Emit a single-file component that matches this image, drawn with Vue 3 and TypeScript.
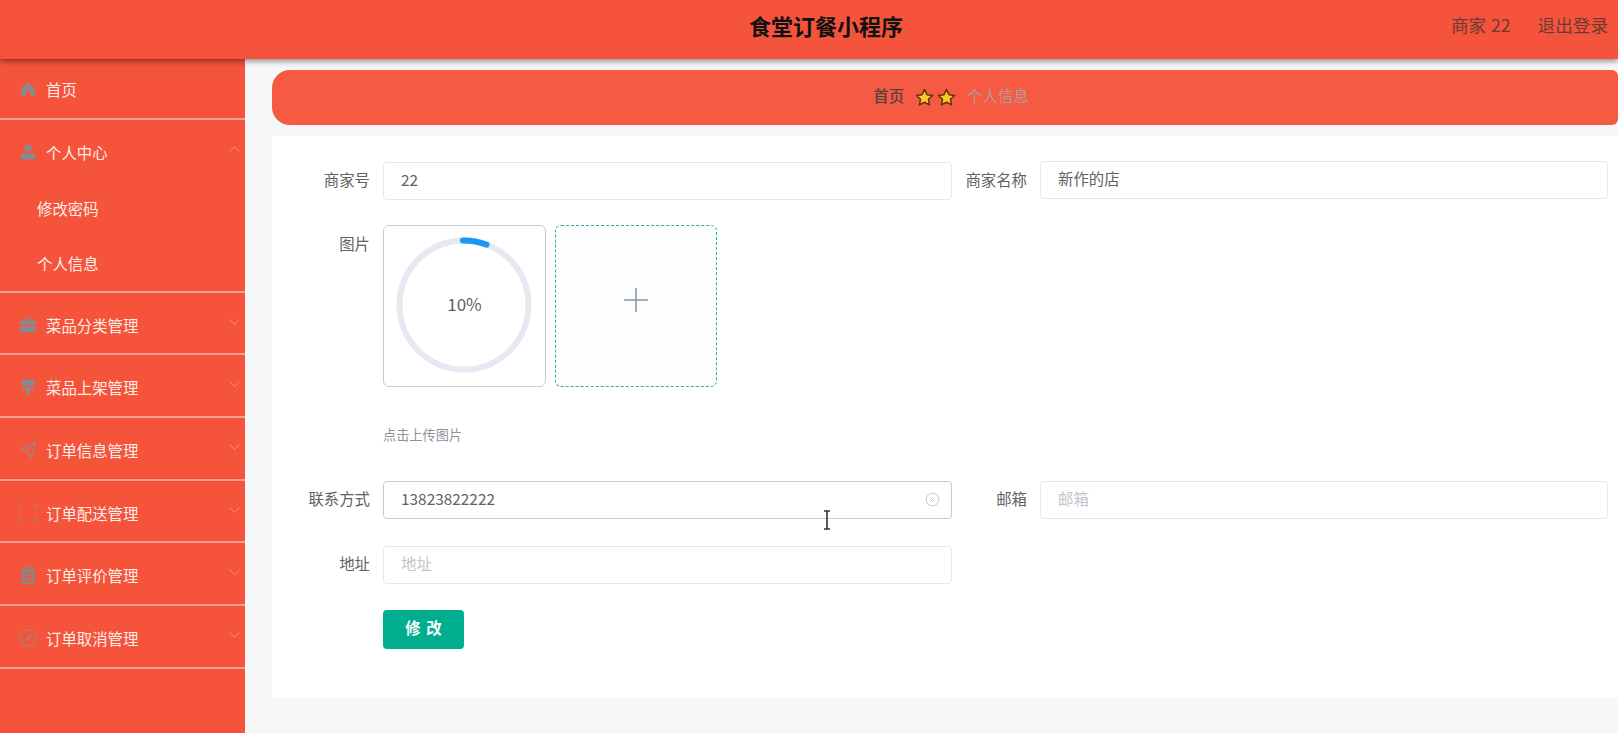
<script setup lang="ts">
interface MenuItem {
  title: string
  icon: string
  children?: string[]
  open?: boolean
}

const menu: MenuItem[] = [
  { title: '首页', icon: 'home' },
  { title: '个人中心', icon: 'user', children: ['修改密码', '个人信息'], open: true },
  { title: '菜品分类管理', icon: 'case' },
  { title: '菜品上架管理', icon: 'brush' },
  { title: '订单信息管理', icon: 'send' },
  { title: '订单配送管理', icon: 'scan' },
  { title: '订单评价管理', icon: 'order' },
  { title: '订单取消管理', icon: 'compass' },
]
</script>

<template>
  <div class="page">
    <header class="topbar">
      <div class="topbar__title">食堂订餐小程序</div>
      <div class="topbar__user">
        <span>商家 22</span>
        <span>退出登录</span>
      </div>
    </header>

    <div class="body">
      <aside class="side">
        <div v-for="item in menu" :key="item.title" class="side__group">
          <div class="side__title">
            <svg class="side__icon" viewBox="0 0 16 16">
              <path v-if="item.icon === 'home'" class="fill" d="M8 1.4 15.6 8.2 14.6 9V15H10.4V11.4A2.4 2.4 0 0 0 5.6 11.4V15H1.4V9L.4 8.2Z" />
              <g v-else-if="item.icon === 'user'" class="fill">
                <circle cx="8" cy="4.2" r="3.6" />
                <path d="M.6 15.4V12.4C.6 10.6 2 9.4 3.8 9.4H12.2C14 9.4 15.4 10.6 15.4 12.4V15.4Z" />
              </g>
              <g v-else-if="item.icon === 'case'" class="fill">
                <path d="M4.8 3.6V1.8C4.8 1.2 5.2.8 5.8.8H10.2C10.8.8 11.2 1.2 11.2 1.8V3.6H10V2H6V3.6Z" />
                <path d="M.4 3.6H15.6V8.2H.4Z" />
                <path d="M.4 9.6H15.6V15.4H.4Z" />
              </g>
              <g v-else-if="item.icon === 'brush'" class="fill">
                <path d="M1.8 .6H14.2V6.6H1.8Z" />
                <path d="M1.8 7.6H14.2V9.8H1.8Z" opacity=".75" />
                <path d="M5.6 9.8H10.4V12.4H9.4V16H6.6V12.4H5.6Z" />
              </g>
              <g v-else-if="item.icon === 'send'" class="line">
                <path d="M15.4 .6 .6 6.8 6.6 9 11.6 15.6Z" />
                <path d="M15.4 .6 6.6 9V12.6" />
              </g>
              <path v-else-if="item.icon === 'scan'" class="line" d="M3.6 .6H.4V4.2M12.4 .6H15.6V4.2M.4 11.8V15.4H3.6M15.6 11.8V15.4H12.4" />
              <g v-else-if="item.icon === 'order'" class="fill fill--soft">
                <path fill-rule="evenodd" d="M5.4 .2H6.2V-1H9.8V.2H10.6V1.6H13.6C14.4 1.6 14.8 2 14.8 2.8V15.8C14.8 16.6 14.4 17 13.6 17H2.4C1.6 17 1.2 16.6 1.2 15.8V2.8C1.2 2 1.6 1.6 2.4 1.6H5.4ZM3.8 5.6V7H12.2V5.6ZM3.8 9.2V10.6H12.2V9.2ZM3.8 12.8V14.2H12.2V12.8Z" />
              </g>
              <g v-else class="line">
                <circle cx="8" cy="8" r="8.2" />
                <path d="M11 4.4 8.8 8.8 6.6 11.4 7.4 8Z" />
              </g>
            </svg>
            <span class="side__text">{{ item.title }}</span>
            <svg v-if="item.title !== '首页'" class="side__arrow" viewBox="0 0 11 6">
              <polyline :points="item.open ? '.5,5.5 5.5,.5 10.5,5.5' : '.5,.5 5.5,5.5 10.5,.5'" />
            </svg>
          </div>
          <div v-for="child in item.children" :key="child" class="side__sub">{{ child }}</div>
        </div>
      </aside>

      <main class="main">
        <nav class="crumb">
          <span class="crumb__home">首页</span>
          <span class="crumb__stars">
            <svg v-for="n in 2" :key="n" class="star" viewBox="0 0 20 20">
              <path d="M10 1.6 12.6 7 18.5 7.8 14.2 11.9 15.3 17.8 10 15 4.7 17.8 5.8 11.9 1.5 7.8 7.4 7Z" />
            </svg>
          </span>
          <span class="crumb__now">个人信息</span>
        </nav>

        <form class="form" @submit.prevent>
          <div class="row">
            <label class="row__label row__label--top">商家号</label>
            <input class="field" value="22" />
            <label class="row__label row__label--top">商家名称</label>
            <input class="field field--up" value="新作的店" />
          </div>

          <div class="row row--upload">
            <label class="row__label">图片</label>
            <div class="upload">
              <div class="upload__boxes">
                <div class="upload__item">
                  <svg class="ring" viewBox="0 0 136 136">
                    <circle class="ring__track" cx="68" cy="68" r="64.5" />
                    <path class="ring__bar" d="M66.9 3.5A64.5 64.5 0 0 1 90.5 7.6" />
                  </svg>
                  <span class="upload__pct">10%</span>
                </div>
                <div class="upload__add">
                  <svg viewBox="0 0 26 26" class="upload__plus">
                    <path d="M13 1V25M1 13H25" />
                  </svg>
                </div>
              </div>
              <div class="upload__hint">点击上传图片</div>
            </div>
          </div>

          <div class="row">
            <label class="row__label">联系方式</label>
            <div class="clearable">
              <input class="field field--focus" value="13823822222" />
              <svg class="clearable__icon" viewBox="0 0 16 16">
                <circle cx="8" cy="8" r="6.8" />
                <path d="M5.8 5.8 10.2 10.2M10.2 5.8 5.8 10.2" />
              </svg>
              <svg class="caret" viewBox="0 0 10 20">
                <path d="M2 1H8M5 1V19M2 19H8" />
              </svg>
            </div>
            <label class="row__label">邮箱</label>
            <input class="field" placeholder="邮箱" />
          </div>

          <div class="row row--address">
            <label class="row__label">地址</label>
            <input class="field" placeholder="地址" />
          </div>

          <div class="row">
            <span></span>
            <div><button class="submit" type="button">修 改</button></div>
          </div>
        </form>
      </main>
    </div>
  </div>
</template>

<style>
html,
body {
  margin: 0;
  background: #f6f7f9;
}
</style>

<style scoped>
.page {
  width: 1618px;
  height: 733px;
  overflow: hidden;
  display: flex;
  flex-direction: column;
  font-family: "Noto Sans CJK SC", "Noto Sans", sans-serif;
  font-size: 15.4px;
  color: #606266;
  background: #f6f7f9;
}

.topbar {
  position: relative;
  z-index: 2;
  flex: 0 0 59px;
  display: flex;
  align-items: center;
  justify-content: flex-end;
  background: #f5533c;
  box-shadow: 0 2px 6px rgba(0, 0, 0, 0.45);
}

.topbar__title {
  position: absolute;
  left: 0;
  right: 0;
  top: 9px;
  padding-left: 34px;
  text-align: center;
  font-size: 22px;
  line-height: 32px;
  font-weight: 700;
  color: #111;
}

.topbar__user {
  position: relative;
  display: flex;
  gap: 27px;
  margin-top: -10px;
  padding-right: 10px;
  font-size: 17.6px;
  word-spacing: 1px;
  color: #6b3b33;
}

.body {
  flex: 1;
  display: flex;
  min-height: 0;
}

.side {
  flex: 0 0 245px;
  background: #f5533a;
  color: #fff;
}

.side__group {
  border-bottom: 2px solid #f8a193;
}

.side__group:first-child .side__title {
  height: 58px;
  padding-top: 1px;
}

.side__title {
  height: 57.7px;
  padding-top: 3px;
  display: flex;
  align-items: center;
  padding-left: 20px;
  padding-right: 5px;
}

.side__icon {
  flex: 0 0 16px;
  width: 16px;
  height: 16px;
  margin-right: 10px;
  overflow: visible;
}

.fill {
  fill: #858c90;
}

.fill--soft {
  fill: #97817b;
}

.line {
  fill: none;
  stroke: #ad7f74;
  stroke-width: 1.4;
}

.side__text {
  color: #fdeee9;
}

.side__arrow {
  margin-left: auto;
  width: 11px;
  height: 6px;
  margin-top: -6px;
  fill: none;
  stroke: rgba(255, 255, 255, 0.32);
}

.side__sub {
  height: 55px;
  line-height: 55px;
  padding-left: 37px;
  color: #fdeee9;
}

.main {
  flex: 1;
  min-width: 0;
  padding: 11px 0 0 27px;
}

.crumb {
  box-sizing: border-box;
  height: 55px;
  padding: 0 0 5px 12px;
  display: flex;
  align-items: center;
  justify-content: center;
  border-radius: 18px 6px 6px 18px;
  background: #f65a43;
}

.crumb__home {
  font-weight: 500;
  color: #4f4340;
}

.crumb__stars {
  display: flex;
  gap: 3px;
  margin: 5px 11px 0 11px;
}

.star {
  width: 19px;
  height: 19px;
  fill: #fcc72a;
  stroke: #5e3413;
  stroke-width: 1.6;
  stroke-linejoin: round;
}

.crumb__now {
  color: #b29b97;
}

.form {
  margin-top: 11px;
  padding: 26px 0 49px;
  display: flex;
  flex-direction: column;
  gap: 26px;
  background: #fff;
}

.row {
  display: grid;
  grid-template-columns: 111px 569px 88px 568px;
  align-items: start;
}

.row--upload {
  margin-top: -1px;
}

.row--address {
  margin-top: 1px;
}

.row__label {
  line-height: 34px;
  text-align: right;
  padding-right: 13px;
}

.row--upload .row__label {
  line-height: 37px;
}

.field {
  display: block;
  box-sizing: border-box;
  width: 100%;
  height: 38px;
  padding: 0 16px 4px 17px;
  border: 1.5px solid #e6e8ee;
  border-radius: 4px;
  outline: none;
  background: #fff;
  font: inherit;
  color: #606266;
}

.field::placeholder {
  color: #c0c4cc;
}

.field--up {
  margin-top: -1px;
}

.field--focus {
  border-color: #c6c9d0;
}

.clearable {
  position: relative;
}

.clearable__icon {
  position: absolute;
  top: 11px;
  right: 12px;
  width: 15px;
  height: 15px;
  fill: none;
  stroke: #c0c4cc;
}

.caret {
  position: absolute;
  top: 29px;
  left: 439px;
  width: 10px;
  height: 20px;
  fill: none;
  stroke: #333;
  stroke-width: 1.6;
}

.upload {
  grid-column: span 3;
  height: 230px;
}

.upload__boxes {
  display: flex;
  gap: 9px;
}

.upload__item,
.upload__add {
  box-sizing: border-box;
  height: 162px;
  border-radius: 6px;
  display: flex;
  align-items: center;
  justify-content: center;
}

.upload__item {
  position: relative;
  width: 163px;
  border: 1px solid #c0ccda;
  background: #fff;
}

.upload__add {
  width: 162px;
  border: 1px dashed #25b598;
  background: #fbfdff;
}

.ring {
  position: absolute;
  top: 11px;
  left: 12px;
  width: 136px;
  height: 136px;
  fill: none;
}

.ring__track {
  stroke: #e5e9f2;
  stroke-width: 6;
}

.ring__bar {
  stroke: #1a98f6;
  stroke-width: 6;
  stroke-linecap: round;
}

.upload__pct {
  position: relative;
  font-size: 17px;
  margin-top: -6px;
  color: #606266;
}

.upload__plus {
  width: 26px;
  height: 26px;
  margin-top: -12px;
  fill: none;
  stroke: #8c939d;
  stroke-width: 1.5;
}

.upload__hint {
  margin-top: 39px;
  font-size: 13.2px;
  line-height: 18px;
  color: #8d939c;
}

.submit {
  width: 81px;
  height: 39px;
  padding: 0 0 5px;
  border: none;
  border-radius: 4px;
  background: #00ae8f;
  color: #fff;
  font: inherit;
  font-weight: 700;
  word-spacing: 2px;
  cursor: pointer;
}
</style>
